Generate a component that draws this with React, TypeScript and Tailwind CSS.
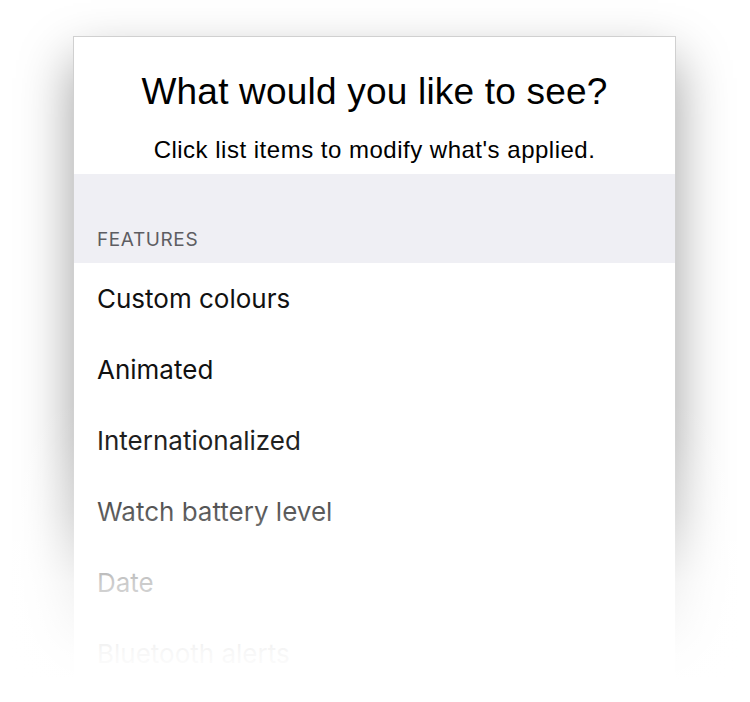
const items = [
  "Custom colours",
  "Animated",
  "Internationalized",
  "Watch battery level",
  "Date",
  "Bluetooth alerts",
];

export default function App() {
  return (
    <div className="relative h-[702px] w-[750px] overflow-hidden bg-white">
      <div className="ml-[73px] mt-[36px] h-[720px] w-[603px] border border-[#d0d0d0] bg-white shadow-[0_24px_50px_rgba(0,0,0,0.38)]">
        <div className="flex flex-col items-center pt-[33px] pb-[10px] font-['Liberation_Sans',Arial,sans-serif] text-black">
          <h1 className="text-[37px] leading-[44px] font-normal tracking-[0.2px]">What would you like to see?</h1>
          <p className="mt-[22px] text-[24px] leading-[28px] tracking-[0.5px]">
            Click list items to modify what's applied.
          </p>
        </div>
        <div className="bg-[#efeff4] pt-[55px] pb-[12px] pl-[23px] font-['Inter',sans-serif] text-[19px] leading-[22px] tracking-[0.6px] text-[#5d5d62]">
          FEATURES
        </div>
        <ul className="font-['Inter',sans-serif]">
          {items.map((item) => (
            <li key={item} className="flex h-[71px] items-center pl-[23px] text-[26px] text-[#111]">
              {item}
            </li>
          ))}
        </ul>
      </div>
      <div className="pointer-events-none absolute inset-x-0 top-[400px] bottom-0 bg-[linear-gradient(to_bottom,rgba(255,255,255,0)_0px,rgba(255,255,255,0.06)_41px,rgba(255,255,255,0.3)_112px,rgba(255,255,255,0.78)_182px,rgba(255,255,255,0.97)_253px,#fff_280px)]" />
    </div>
  );
}
